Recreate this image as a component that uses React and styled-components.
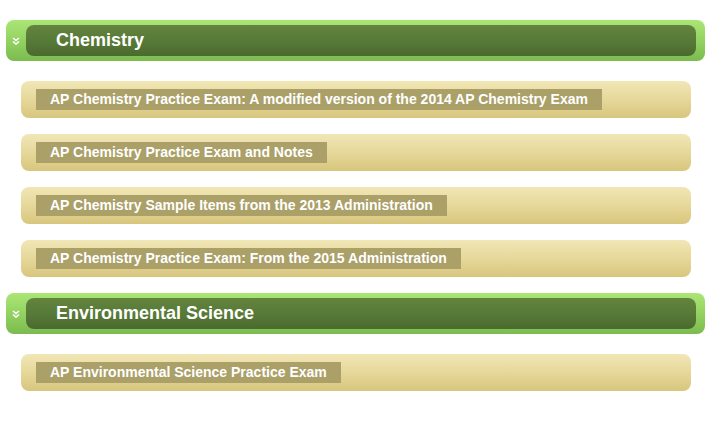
import styled, { createGlobalStyle } from "styled-components";

const GlobalStyle = createGlobalStyle`
    body {
        margin: 0;
        background: #ffffff;
        font-family: "Liberation Sans", Arial, Helvetica, sans-serif;
    }
`;

const Page = styled.div`
    padding: 20px 14px 0 6px;
    width: 719px;
    box-sizing: border-box;
`;

const Section = styled.section`
    display: flex;
    flex-direction: column;
    margin-bottom: 16px;
`;

const Header = styled.div`
    display: flex;
    align-items: center;
    height: 41px;
    width: 699px;
    box-sizing: border-box;
    padding: 5px 9px 5px 0;
    border-radius: 8px;
    background: linear-gradient(to bottom, #abe675 0%, #93d262 50%, #7bbb4f 100%);
    margin-bottom: 20px;
`;

const Toggle = styled.div`
    width: 20px;
    display: flex;
    justify-content: center;
    align-items: center;
`;

const Bar = styled.h2`
    flex: 1;
    margin: 0;
    height: 31px;
    display: flex;
    align-items: center;
    padding-left: 30px;
    border-radius: 8px;
    background: linear-gradient(to bottom, #62843f 0%, #587a38 50%, #4a6a2e 100%);
    color: #ffffff;
    font-size: 18px;
    font-weight: bold;
`;

const List = styled.div`
    display: flex;
    flex-direction: column;
    gap: 16px;
    padding-left: 15px;
`;

const Item = styled.div`
    width: 670px;
    height: 37px;
    box-sizing: border-box;
    padding: 8px 15px;
    border-radius: 8px;
    background: linear-gradient(to bottom, #f1e7b6 0%, #e6d89a 50%, #d8c67d 100%);
    display: flex;
    align-items: center;
`;

const Label = styled.a`
    display: inline-block;
    background: #aaa068;
    color: #ffffff;
    font-size: 14px;
    font-weight: bold;
    line-height: 21px;
    padding: 0 14px;
    text-decoration: none;
    white-space: nowrap;
`;

const Chevrons = () => (
    <svg width="8" height="8" viewBox="0 0 8 8">
        <path d="M1 1 L4 3.5 L7 1 M1 4.5 L4 7 L7 4.5" fill="none" stroke="#ffffff" strokeWidth="1.6" />
    </svg>
);

const sections = [
    {
        title: "Chemistry",
        items: [
            "AP Chemistry Practice Exam: A modified version of the 2014 AP Chemistry Exam",
            "AP Chemistry Practice Exam and Notes",
            "AP Chemistry Sample Items from the 2013 Administration",
            "AP Chemistry Practice Exam: From the 2015 Administration",
        ],
    },
    {
        title: "Environmental Science",
        items: ["AP Environmental Science Practice Exam"],
    },
];

const App = () => {
    return (
        <Page>
            <GlobalStyle />
            {sections.map((s) => (
                <Section key={s.title}>
                    <Header>
                        <Toggle>
                            <Chevrons />
                        </Toggle>
                        <Bar>{s.title}</Bar>
                    </Header>
                    <List>
                        {s.items.map((it) => (
                            <Item key={it}>
                                <Label>{it}</Label>
                            </Item>
                        ))}
                    </List>
                </Section>
            ))}
        </Page>
    );
};

export default App;
